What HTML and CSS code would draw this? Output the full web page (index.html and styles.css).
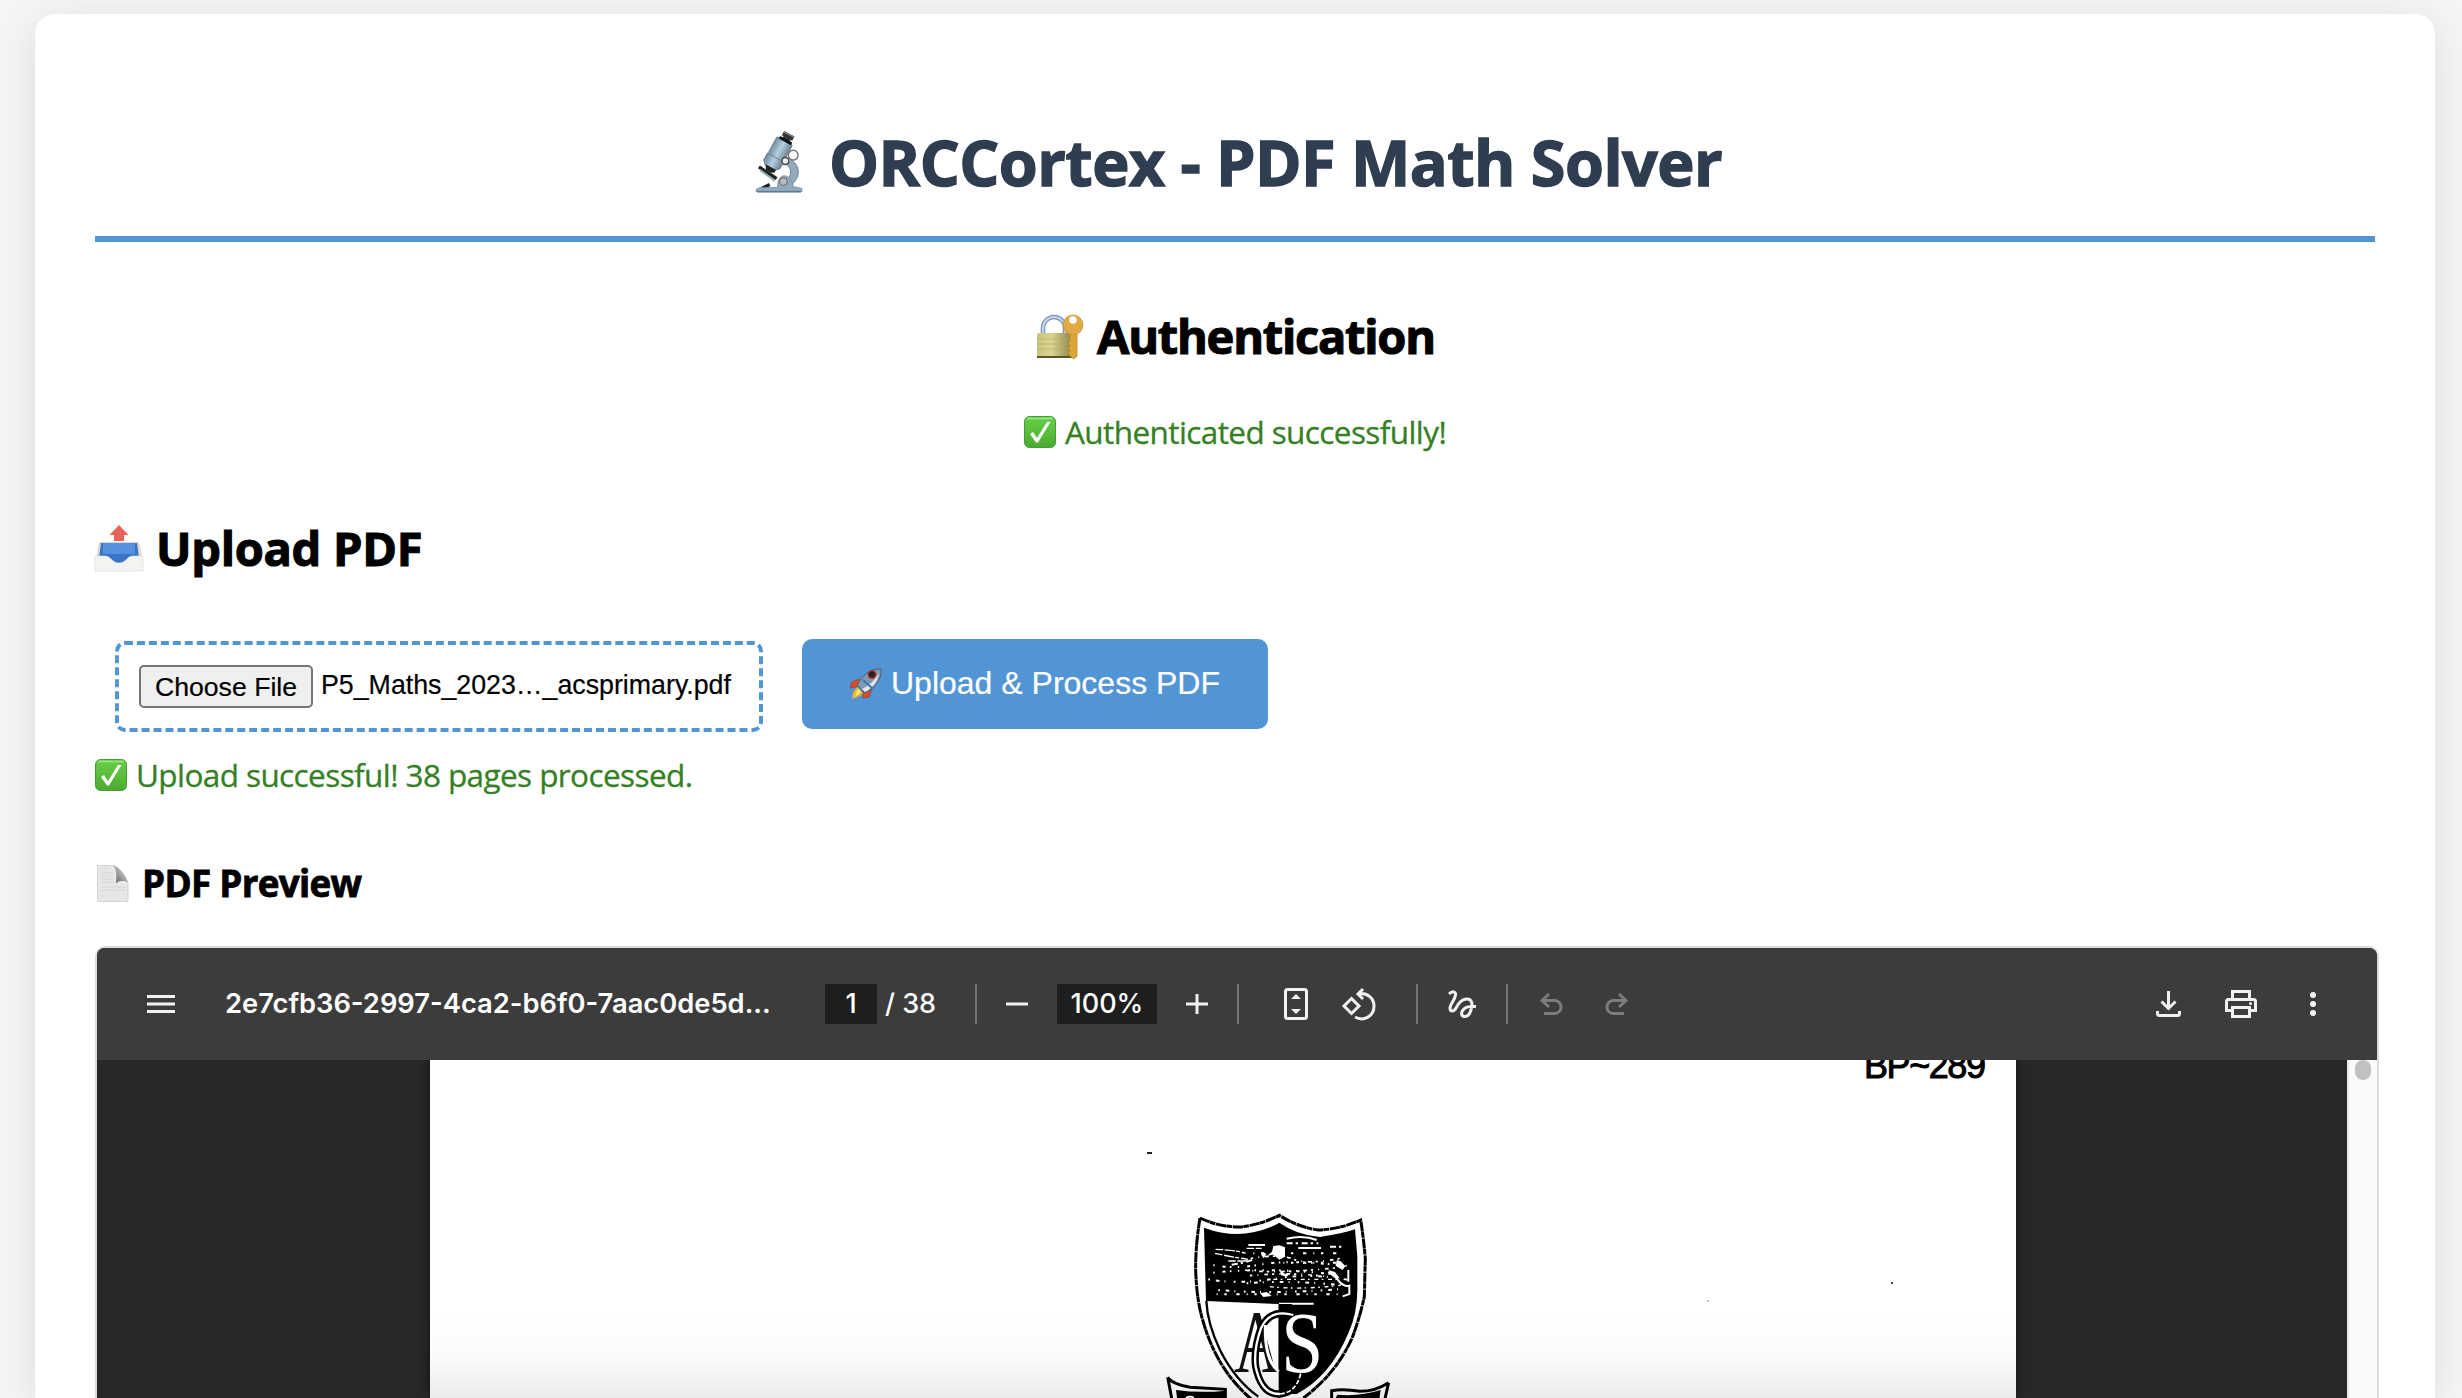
FILE: index.html
```html
<!DOCTYPE html>
<html lang="en">
<head>
<meta charset="utf-8">
<title>ORCCortex - PDF Math Solver</title>
<link rel="stylesheet" href="styles.css">
</head>
<body>
<svg class="defs" width="0" height="0" aria-hidden="true">
  <defs>
    <linearGradient id="green" x2="0" y2="1"><stop stop-color="#68cf49"/><stop offset="1" stop-color="#4bab31"/></linearGradient>
    <linearGradient id="steel"><stop stop-color="#6f8ba1"/><stop offset=".5" stop-color="#b4cfe0"/><stop offset="1" stop-color="#6c7f90"/></linearGradient>
    <linearGradient id="brass"><stop stop-color="#c9c57d"/><stop offset=".4" stop-color="#d9d58f"/><stop offset="1" stop-color="#8d864b"/></linearGradient>
    <linearGradient id="fold" x1="0" y1="1" x2="1" y2="0"><stop stop-color="#555"/><stop offset="1" stop-color="#f4f4f4"/></linearGradient>
    <symbol id="check" viewBox="0 0 32 32">
      <rect x=".5" y=".5" width="31" height="31" rx="5" fill="url(#green)" stroke="#479c33"/>
      <path d="M3 2.5h26" stroke="#9be585" stroke-width="1.5"/>
      <path d="M6 18l3-2 4 6L23 6h3.500L14 26.500h-2z" fill="#fff"/>
    </symbol>
  </defs>
</svg>
<main class="card">
  <h1 class="title">
    <svg class="microscope" viewBox="0 0 48 63">
      <path d="M36 29c11 7 9 21-3 27l-6-5c9-2 11-12 5-17z" fill="#91aabd" stroke="#657f93"/>
      <path d="M3 36l18 12M6 58l8-4" stroke="#222" stroke-width="3.500"/><path d="M4 39l15 11" stroke="#8aa" stroke-width="2"/>
      <path d="M0 59l4-2h18c0-8 3-12 7-12s8 4 9 11l9 2v3H0z" fill="#8fa9be" stroke="#6c8799" stroke-width=".7"/>
      <path d="M1 61.500h45" stroke="#526b7b" stroke-width="1.500"/>
      <circle cx="28" cy="51" r="4" fill="#bbb" stroke="#666"/>
      <g transform="rotate(29 23 20)"><path d="M18-1h12v5h-2v4h-8V4h-2z" fill="#333"/><path d="M18 0h12" stroke="#999"/><rect x="14" y="7" width="19" height="20" rx="2" fill="url(#steel)"/><path d="M14 27h19v8l-4 4H18l-4-4z" fill="url(#steel)" stroke="#596b79" stroke-width=".7"/><path d="M18 38h12v3l-3 2h-6z" fill="#222"/><path d="M17 7h14" stroke="#111" stroke-width="3"/></g>
      <circle cx="38" cy="24" r="5" fill="#fff" stroke="#777" stroke-width="1.500"/><circle cx="30" cy="30" r="3.500" fill="#eee" stroke="#444" stroke-width="1.500"/>
    </svg><span>ORCCortex - PDF Math Solver</span>
  </h1>
  <h2 class="auth-title">
    <svg class="lock" viewBox="0 0 46 46">
      <path d="M6 21V14a11 11 0 0 1 22 0v7" fill="none" stroke="#7d93b5" stroke-width="4.500"/><path d="M6 21V14a11 11 0 0 1 22 0v7" fill="none" stroke="#c3d5ee" stroke-width="2"/>
      <rect x="0" y="19" width="35" height="25" rx="1.500" fill="url(#brass)"/><path d="M0 43h35" stroke="#5f5425" stroke-width="2"/><path d="M1 25h33M1 30h33M1 35h33" stroke="#aaa568" stroke-width=".6"/>
      <path d="M33 20h7v22l-3 3-4-3-2-3 2-2-2-3 2-2-2-3 2-2z" fill="#dda537" stroke="#b57e1f" stroke-width=".7"/>
      <circle cx="36" cy="11" r="10" fill="#dfaa42" stroke="#c08c2b" stroke-width=".7"/><circle cx="36" cy="6" r="3.800" fill="#fff"/>
    </svg><span>Authentication</span>
  </h2>
  <p class="status status-auth"><svg class="check"><use href="#check"/></svg><span>Authenticated successfully!</span></p>
  <h2 class="upload-title">
    <svg class="tray" viewBox="0 0 48 46">
      <path d="M4 17h40l3 16H1z" fill="#d9d9d1"/><path d="M6 18h36l2 15q-12 8-20 5Q14 40 4 33z" fill="#3974c6"/><path d="M8 18h32v11H8z" fill="#5591df"/>
      <path d="M0 31h10c6 0 7 7 14 7s8-7 14-7h10v15H0z" fill="#f3f3f0" stroke="#ddd" stroke-width=".7"/>
      <path d="M24 0l9.500 10H29v6H19v-6h-4.500z" fill="#e96458"/>
    </svg><span>Upload PDF</span>
  </h2>
  <div class="upload-row">
    <div class="file-input"><button class="choose">Choose File</button><span class="filename">P5_Maths_2023…_acsprimary.pdf</span></div>
    <button class="upload">
      <svg class="rocket" viewBox="0 0 32 32">
        <path d="M9 11L2 14 0 20l10-2zM22 20l-3 9-6 1 0-9z" fill="#e14c25" stroke="#9c2b1b" stroke-width=".6"/>
        <path d="M7 19l6 6-3 3-8 3 1-6z" fill="#f5b52e"/><path d="M8 21l3 3-6 5z" fill="#fff07a"/>
        <path d="M31 1c1 11-7 20-16 24l-8-8C12 8 20 0 31 1z" fill="#7f9bb4" stroke="#3d5063" stroke-width=".8"/><path d="M29 5c-1 9-7 15-14 19l-3-3C20 17 25 12 29 5z" fill="#dfe6ec"/><path d="M13 12l9 8" stroke="#3d75b5" stroke-width="2"/>
        <circle cx="22" cy="6.500" r="3.800" fill="#222" stroke="#a43629" stroke-width="1.500"/>
      </svg><span>Upload &amp; Process PDF</span>
    </button>
  </div>
  <p class="status status-upload"><svg class="check"><use href="#check"/></svg><span>Upload successful! 38 pages processed.</span></p>
  <h3 class="preview-title">
    <svg class="doc" viewBox="0 0 32 37">
      <path d="M.500.500H17c6 2 9 8 14 17v19H.500z" fill="#e7e7e7" stroke="#d3d3d3"/><path d="M4 4h5M4 8h12M4 11h12M4 14h12M4 17h13M4 22h24M4 25h24M4 31h7" stroke="#d2d2d2" stroke-width=".8"/>
      <path d="M16 .500c3 3 4 8 3 18 3-3 8-3 12-1C28 9 23 3 16 .500z" fill="url(#fold)"/>
    </svg><span>PDF Preview</span>
  </h3>
  <section class="viewer">
    <div class="toolbar">
      <svg class="menu" viewBox="0 0 28 18" fill="none" stroke="#f1f1f1" stroke-width="3"><path d="M0 1.500h28M0 9h28M0 16.500h28"/></svg>
      <span class="name">2e7cfb36-2997-4ca2-b6f0-7aac0de5d...</span>
      <span class="field page">1</span><span class="total">/ 38</span>
      <i class="sep sep-page"></i>
      <svg class="minus" viewBox="0 0 22 22"><path d="M0 11h22" stroke="#f1f1f1" stroke-width="3"/></svg>
      <span class="field zoom">100%</span>
      <svg class="plus" viewBox="0 0 22 22"><path d="M0 11h22M11 1v20" stroke="#f1f1f1" stroke-width="3"/></svg>
      <i class="sep sep-zoom"></i>
      <svg class="fit" viewBox="0 0 24 32"><rect x="1.500" y="1.500" width="21" height="29" rx="2" fill="none" stroke="#f1f1f1" stroke-width="3"/><path d="M7 11l5-5 5 5zM7 21l5 5 5-5z" fill="#f1f1f1"/></svg>
      <svg class="rotate" viewBox="0 0 34 33" fill="none" stroke="#f1f1f1" stroke-width="3"><path d="M9.500 10.500l7.500 7.500-7.500 7.500L2 18zM21 1l-5 5 5 5M16.500 5.700C26 4.500 32 10.500 32 18c0 10-10 16-19 11"/></svg>
      <i class="sep sep-fit"></i>
      <svg class="draw" viewBox="0 0 28 28" fill="none" stroke="#f1f1f1" stroke-width="3"><path d="M1 4C4 1 8 1 7.500 5 7 10 2 14 2 18c0 4 4 4 6 0 3-6 7-9 11-9 5 0 6 5 4 11-1.500 4.500-4 7-7 6.500-3-.5-3-4-1-6.500 3-4 7-3.500 13-3.500"/></svg>
      <i class="sep sep-draw"></i>
      <svg class="undo" viewBox="0 0 24 22" fill="none" stroke="#7c7c7c" stroke-width="3"><path d="M9 1L2 7.500 9 14M2 7.500h13.500a6.600 6.600 0 0 1 0 13H4"/></svg>
      <svg class="redo" viewBox="0 0 24 22" fill="none" stroke="#7c7c7c" stroke-width="3"><path d="M15 1l7 6.500-7 6.500M22 7.500H8.500a6.600 6.600 0 0 0 0 13H20"/></svg>
      <svg class="download" viewBox="0 0 25 26" fill="none" stroke="#f1f1f1" stroke-width="3"><path d="M12.500 0v17M5.500 10.500l7 7 7-7M1.500 20v2.500q0 2 2 2h18q2 0 2-2V20"/></svg>
      <svg class="print" viewBox="0 0 32 28" fill="none" stroke="#f1f1f1" stroke-width="3"><path d="M7.500 8.500v-7h17v7M7.500 20.500h-6v-9q0-2 2-2h25q2 0 2 2v9h-6M7.500 17.500h17v9h-17z"/><circle cx="25.500" cy="13.500" r="1.500" fill="#f1f1f1" stroke="none"/></svg>
      <svg class="more" viewBox="0 0 6 24" fill="#f1f1f1"><circle cx="3" cy="3" r="3"/><circle cx="3" cy="12" r="3"/><circle cx="3" cy="21" r="3"/></svg>
    </div>
    <div class="canvas">
      <svg class="sheet" viewBox="430 1060 1586 338">
        <text x="1864" y="1078" font-family="Liberation Sans" font-size="36" textLength="122" lengthAdjust="spacing" stroke="#000" stroke-width="1">BP~289</text>
        <path d="M1147 1153h5" stroke="#222" stroke-width="2"/><circle cx="1892" cy="1283" r="1"/><circle cx="1708" cy="1301" r="1" fill="#aaa"/>
        <g transform="translate(1130 1190) scale(.33333)">
          <path d="M210 84Q270 112 330 111Q390 105 448 76Q505 112 565 120Q630 118 692 90Q700 140 706 205L703 320Q690 380 668 440Q620 550 520 624M210 84Q196 170 197 240Q200 330 218 390Q260 540 365 628" fill="none" stroke="#000" stroke-width="9" stroke-dasharray="31 1 17 2"/>
          <path d="M222 113Q300 142 370 127Q420 116 448 98Q500 135 570 141Q640 130 675 118L682 200V300Q682 370 655 430Q600 560 500 612H446V342L228 333Z"/>
          <path d="M229 333Q232 400 270 480Q315 570 385 620" fill="none" stroke="#000" stroke-width="7"/>
          <g stroke="#fff" fill="none">
            <path d="M355 165h50M470 146q50-12 90 4M505 174h68" stroke-width="6"/>
            <path d="M257 178q60 2 90 12M255 190q55 12 100 18M295 213h60M350 175h45" stroke-width="4" stroke-dasharray="22 5 31 3 12 6"/>
            <path d="M305 224q40-4 70-18M470 160h95M600 170h45" stroke-width="6" stroke-dasharray="18 9 7 11"/>
            <path d="M250 225q65 13 145-2t255 5M250 248q160-17 350 4" stroke-width="6" stroke-dasharray="4 24 9 13 5 19"/>
            <path d="M362 205q90-14 130 3t150-5M345 240q80 12 270-6M360 257q120-12 240 4" stroke-width="5" stroke-dasharray="7 15 3 18 11 12"/>
            <path d="M235 268q90 16 200-2t220 4M350 280q120-11 290 6M265 300q160 14 380-4" stroke-width="6" stroke-dasharray="5 18 11 15 3 25"/>
            <path d="M370 190h270M460 218h170M260 313h380" stroke-width="6" stroke-dasharray="3 20 7 29 10 21"/>
            <path d="M420 290q90 10 210-4M430 268h190" stroke-width="4" stroke-dasharray="12 10 5 14"/>
            <path d="M595 245l25 20q20 28 38 22v25l-20 7M655 240v35" stroke-width="6"/>
            <path d="M447 341h104" stroke-width="6"/>
          </g>
          <path d="M430 168l18-2 17 6v28l-17 9-18-15-18 3 14-12zM620 210l12 4 14 14-8 12-20-12zM595 240l20 6 15 20-22-8zM400 185l9 8-8 12-7-10zM390 310l20-4 15 12-25 3zM450 240l15 12 20-5-15 13-18-5z" fill="#fff"/>
          <text x="312" y="544" font-family="Liberation Serif" font-size="268" textLength="140" lengthAdjust="spacingAndGlyphs" fill="#111">A</text>
          <path d="M446 342h40v200h-40z"/>
          <path d="M490 375Q420 355 393 415Q370 480 377 530Q395 615 450 612Q500 607 512 550" fill="none" stroke="#000" stroke-width="22"/>
          <path d="M490 375Q420 355 393 415Q370 480 377 530Q395 615 450 612" fill="none" stroke="#fff" stroke-width="7"/>
          <path d="M450 612Q500 607 512 550" fill="none" stroke="#fff" stroke-width="5" stroke-dasharray="14 6"/>
          <path d="M406 405Q403 510 446 545" fill="none" stroke="#fff" stroke-width="9"/>
          <text x="454" y="547" font-family="Liberation Serif" font-size="258" textLength="126" lengthAdjust="spacingAndGlyphs" fill="#fff">S</text>
          <path d="M113 562Q125 582 180 592L286 598V624M113 562L126 630M776 578Q735 604 690 604Q640 596 605 602V630M776 578L764 630" fill="none" stroke="#000" stroke-width="9"/>
          <path d="M138 600Q210 610 288 602V630H142ZM622 614Q690 620 752 600L748 630H614Z"/>
          <path d="M168 624q12-8 24 0" stroke="#fff" stroke-width="5"/>
        </g>
      </svg>
      <div class="scroll"><div class="thumb"></div></div>
    </div>
  </section>
</main>
</body>
</html>
```
FILE: styles.css
```css
* { box-sizing: border-box; }
html { overflow: hidden; }
body { margin: 0; height: 1398px; padding: 14px 0 0 35px; overflow: hidden; background: #f5f5f5; font-family: "Open Sans", "Noto Sans", sans-serif; color: #000; }
h1, h2, h3, p { margin: 0; display: flex; white-space: nowrap; }
svg { display: block; flex: none; overflow: visible; }
.defs { position: absolute; }
.card { width: 2400px; height: 1384px; padding: 105px 60px 0; border-radius: 20px 20px 0 0; background: #fff; box-shadow: 0 8px 40px rgba(0,0,0,.1); }

.title { height: 123px; padding-left: 661px; border-bottom: 6px solid #5295d5; color: #2f3d50; font-size: 63px; line-height: 86px; font-weight: 700; letter-spacing: -.55px; -webkit-text-stroke: 1.4px #2f3d50; }
.microscope { width: 47px; height: 63px; margin: 12px 26px 0 0; }
h2 { height: 64px; font-size: 47px; line-height: 64px; -webkit-text-stroke: 1.1px #000; }
.auth-title { margin-top: 62px; padding-left: 942px; letter-spacing: -1.25px; }
.lock { width: 46px; height: 46px; margin: 10px 14px 0 0; }
.status { height: 44px; color: #357f24; font-size: 31.500px; line-height: 44px; letter-spacing: -.59px; -webkit-text-stroke: .3px #357f24; }
.status-auth { margin-top: 42px; padding-left: 929px; }
.check { width: 32px; height: 32px; margin: 6px 9px 0 0; }
.upload-title { margin-top: 62px; letter-spacing: -.3px; }
.tray { width: 48px; height: 46px; margin: 9px 13px 0 0; }

.upload-row { display: flex; align-items: flex-start; height: 93px; margin-top: 59px; padding-left: 20px; font-family: "Liberation Sans", Arial, sans-serif; }
.file-input { display: flex; width: 648px; height: 91px; margin-top: 2px; padding: 20px; border: 4px dashed #5295d5; border-radius: 10px; }
.choose { width: 174px; height: 43px; padding: 0; border: 2px solid #767676; border-radius: 5px; background: #efefef; color: #000; font: 26.670px/36px "Liberation Sans", Arial, sans-serif; }
.filename { margin-left: 8px; font-size: 26.750px; line-height: 40px; white-space: nowrap; }
.upload { display: flex; width: 466px; height: 90px; margin-left: 39px; padding: 0 0 0 48px; border: 0; border-radius: 10px; background: #5295d5; color: #fff; font: 32px/88px "Liberation Sans", Arial, sans-serif; white-space: nowrap; }
.rocket { width: 32px; height: 32px; margin: 29px 9px 0 0; }
.upload, .choose, .filename { -webkit-text-stroke: .2px currentColor; }
.status-upload { margin-top: 21px; }
.preview-title { height: 50px; margin-top: 61px; font-size: 36.800px; line-height: 50px; letter-spacing: -.7px; -webkit-text-stroke: .8px #000; }
.doc { width: 32px; height: 37px; margin: 7px 13px 0 2px; }

.viewer { width: 2284px; height: 452px; margin-top: 38px; overflow: hidden; border: 2px solid #dcdcdc; border-bottom: 0; border-radius: 10px 10px 0 0; background: #282828; }
.toolbar { display: flex; align-items: center; height: 112px; padding-left: 50px; background: #3c3c3c; color: #fff; font: 500 27px/40px Inter, Roboto, sans-serif; white-space: nowrap; }
.menu { width: 28px; height: 18px; }
.name { width: 545px; margin-left: 50px; font-size: 27.300px; font-weight: 600; }
.field { height: 40px; background: #1e1e1e; text-align: center; }
.page { width: 52px; margin-left: 55px; }
.total { width: 50px; margin-left: 8px; }
.sep { width: 2px; height: 40px; background: #757575; }
.sep-page { margin-left: 40px; }
.minus { width: 22px; height: 22px; margin-left: 29px; }
.zoom { width: 100px; margin-left: 29px; }
.plus { width: 22px; height: 22px; margin-left: 29px; }
.sep-zoom { margin-left: 29px; }
.fit { width: 24px; height: 32px; margin-left: 45px; }
.rotate { width: 34px; height: 33px; margin-left: 34px; }
.sep-fit { margin-left: 40px; }
.draw { width: 28px; height: 28px; margin-left: 30px; }
.sep-draw { margin-left: 30px; }
.undo { width: 24px; height: 22px; margin-left: 32px; }
.redo { width: 24px; height: 22px; margin-left: 40px; }
.download { width: 25px; height: 26px; margin-left: 528px; }
.print { width: 32px; height: 28px; margin-left: 44px; }
.more { width: 6px; height: 24px; margin-left: 53px; }
.canvas { display: flex; height: 338px; padding-left: 333px; overflow: hidden; }
.sheet { width: 1586px; height: 338px; overflow: hidden; background: linear-gradient(#fff 258px, #fafafa 300px, #ececec 338px); box-shadow: 0 0 10px #111; }
.scroll { width: 30px; height: 338px; margin-left: 331px; border-left: 2px solid #e8e8e8; background: #fafafa; }
.thumb { width: 16px; height: 20px; margin-left: 6px; border-radius: 8px; background: #c1c1c1; }
```
